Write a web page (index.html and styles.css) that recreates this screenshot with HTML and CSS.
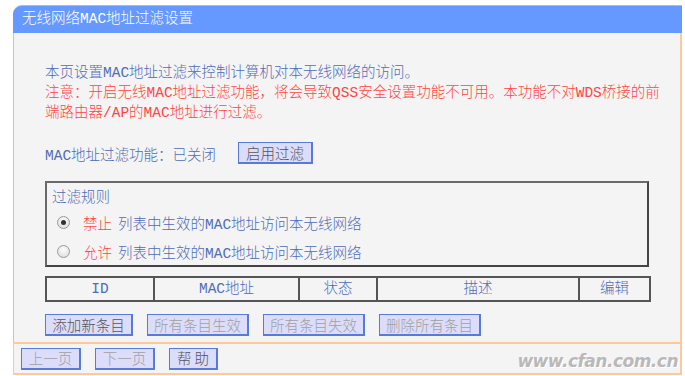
FILE: index.html
```html
<!DOCTYPE html>
<html lang="zh-CN">
<head>
  <meta charset="UTF-8" />
  <meta name="viewport" content="width=device-width, initial-scale=1.0"/>
  <title>无线网络MAC地址过滤设置</title>
  <link rel="stylesheet" href="styles.css">
</head>
<body>
  <div class="panel">
    <div class="panel-title">无线网络MAC地址过滤设置</div>

    <div class="panel-body">
      <p class="intro">本页设置MAC地址过滤来控制计算机对本无线网络的访问。</p>
      <p class="warn">注意：开启无线MAC地址过滤功能，将会导致QSS安全设置功能不可用。本功能不对WDS桥接的前端路由器/AP的MAC地址进行过滤。</p>

      <div class="status-row">
        <span>MAC地址过滤功能：已关闭</span>
        <button class="btn btn-on">启用过滤</button>
      </div>

      <div class="rules">
        <div class="rules-title">过滤规则</div>
        <label class="rule">
          <input type="radio" name="rule" checked>
          <span class="red">禁止</span>
          <span>列表中生效的MAC地址访问本无线网络</span>
        </label>
        <label class="rule">
          <input type="radio" name="rule">
          <span class="red">允许</span>
          <span>列表中生效的MAC地址访问本无线网络</span>
        </label>
      </div>

      <table class="list">
        <tr>
          <th class="c-id">ID</th>
          <th class="c-mac">MAC地址</th>
          <th class="c-state">状态</th>
          <th class="c-desc">描述</th>
          <th class="c-edit">编辑</th>
        </tr>
      </table>

      <div class="actions">
        <button class="btn btn-on w88">添加新条目</button>
        <button class="btn w102">所有条目生效</button>
        <button class="btn w102">所有条目失效</button>
        <button class="btn w102">删除所有条目</button>
      </div>
    </div>

    <div class="panel-foot">
      <button class="btn w59">上一页</button>
      <button class="btn w59">下一页</button>
      <button class="btn btn-on w48">帮 助</button>
      <span class="mark">www.cfan.com.cn</span>
    </div>
  </div>
</body>
</html>
```

FILE: styles.css
```css
body {
  margin: 0;
  background: #fff;
  font-family: "Liberation Mono", "Noto Sans CJK SC", monospace;
  font-size: 14.5px;
  font-weight: 300;
  color: #4f6cb6;
}

.panel {
  width: 669px;
  margin: 5px 0 0 13px;
}

.panel-title {
  height: 28px;
  line-height: 27px;
  padding-left: 9px;
  background: #6699ff;
  border-top: 1px solid #9dbcff;
  box-sizing: border-box;
  border-radius: 9px 0 0 0;
  color: #fff;
  font-size: 14.5px;
}

.panel-body {
  background: #f4f4f4;
  border-left: 1px solid #ffb877;
  border-right: 2px solid #ffc899;
  padding: 30px 0 6px 31px;
}

.intro,
.warn {
  margin: 0;
  line-height: 20px;
}

.warn {
  color: #ff4444;
  width: 618px;
}

.status-row {
  display: flex;
  align-items: center;
  gap: 22px;
  margin-top: 19px;
  height: 22px;
}

.btn {
  height: 22px;
  padding: 0 6px;
  background: #dcdcfb;
  border: 2px solid #5a7ad8;
  border-width: 1px 2px 2px 1px;
  color: #a0a0a0;
  font-family: "Noto Sans CJK SC", sans-serif;
  font-size: 14.5px;
  font-weight: 300;
  line-height: 18px;
  cursor: pointer;
}

.btn-on {
  color: #555;
}

.status-row .btn {
  width: 75px;
}

.w88 { width: 88px; }
.w102 { width: 102px; }
.w59 { width: 60px; }
.w48 { width: 49px; }

.rules {
  width: 604px;
  height: 86px;
  margin-top: 17px;
  border: 2px solid #5e5e5e;
  border-color: #6a6a6a #444 #444 #6a6a6a;
  box-sizing: border-box;
  padding: 5px 0 0 5px;
}

.rules-title {
  line-height: 20px;
}

.rule {
  display: flex;
  align-items: center;
  gap: 6px;
  height: 29px;
  padding-left: 5px;
}

.rule input {
  appearance: none;
  margin: 0 7px 0 0;
  width: 13px;
  height: 13px;
  border-radius: 50%;
  border: 1px solid #9a9a9a;
  background: radial-gradient(circle at 50% 35%, #fdfdfd, #d8d8d8);
  display: grid;
  place-items: center;
}

.rule input:checked::after {
  content: "";
  width: 5px;
  height: 5px;
  border-radius: 50%;
  background: #333;
}

.red {
  color: #ff4444;
}

.list {
  width: 606px;
  margin-top: 9px;
  border-collapse: collapse;
  border: 2px solid #555;
}

.list th {
  height: 22px;
  padding: 0;
  border-left: 2px solid #555;
  font-weight: 300;
  color: #4f6cb6;
  text-align: center;
  line-height: 20px;
}

.c-id { width: 106px; }
.c-mac { width: 143px; }
.c-state { width: 76px; }
.c-desc { width: 200px; }

.actions {
  display: flex;
  gap: 14px;
  margin-top: 12px;
}

.panel-foot {
  position: relative;
  height: 29px;
  background: #f4f4f4;
  border: 2px solid #ffc899;
  border-width: 2px 2px 2px 1px;
  display: flex;
  align-items: center;
  gap: 14px;
  padding-left: 7px;
}

.mark {
  position: absolute;
  right: 2px;
  bottom: 2px;
  font-family: "DejaVu Sans", sans-serif;
  font-style: italic;
  font-weight: bold;
  font-size: 17px;
  letter-spacing: -0.5px;
  color: #b9b9b9;
  text-shadow: 1px 1px 0 #fff;
}
```
